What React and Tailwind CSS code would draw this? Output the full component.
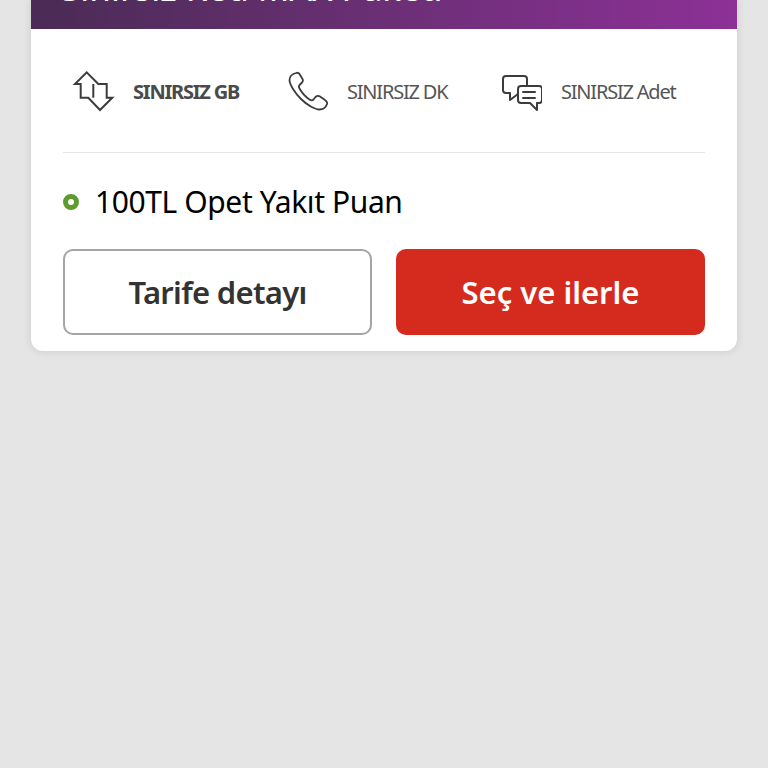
import React from "react";

function DataIcon() {
  return (
    <svg width="40" height="40" viewBox="0 0 40 40" fill="none" stroke="#3c3c3c" strokeWidth="2" strokeLinejoin="miter" className="overflow-visible">
      <path d="M7.7 26.7 V13 H2 L13.7 1.3 L25.3 13 H33.7 V26.7 H39.3 L27 39 L15.3 26.7 Z" />
      <path d="M20.3 13 V26.7" />
    </svg>
  );
}

function PhoneIcon() {
  return (
    <svg width="40" height="40" viewBox="0 0 40 40" fill="none" stroke="#3c3c3c" strokeWidth="1.8" strokeLinejoin="round" strokeLinecap="round">
      <path d="M8 2 C4.5 3 1.5 5.5 1.5 9 C1.5 13.5 7 22 13 28 C19 34 27 38.5 31.5 38.5 C35 38.5 38 36 39 33 C39.5 31 38.5 30 37 29 L32 25.5 C30.5 24.5 29 24.5 27.5 26 L25.5 28.5 C24.5 29.5 23 29.5 21.5 28.5 C17 25.5 14 22 11.5 17.5 C10.5 16 11 14.5 12 13.5 L14 11.5 C15 10.5 15 9 14.5 8 L11.5 3 C10.5 1.5 9.5 1.5 8 2 Z" />
    </svg>
  );
}

function ChatIcon() {
  return (
    <svg width="40" height="40" viewBox="0 0 40 40" fill="none" stroke="#3c3c3c" strokeWidth="2" strokeLinejoin="round" strokeLinecap="round">
      <path d="M25 14 V8 C25 6 24 5 22 5 H4 C2 5 1 6 1 8 V19 C1 21 2 22 4 22 H8 V29 L16 23" />
      <path d="M19 15 H37 C39 15 40 16 40 18 V29 C40 31 39 32 37 32 H35 V39 L28 32 H19 C17 32 16 31 16 29 V18 C16 16 17 15 19 15 Z" />
      <path d="M21 21 H33 M21 27 H33" />
    </svg>
  );
}

function Feature({ icon, label, bold, className }) {
  return (
    <div className={`flex items-center ${className}`}>
      {icon}
      <span
        className={`mt-[2px] text-[20px] leading-none whitespace-nowrap tracking-[-1.2px] ${
          bold ? "font-bold text-[#4a4a4a]" : "text-[#555555]"
        }`}
      >
        {label}
      </span>
    </div>
  );
}

export default function App() {
  return (
    <div className="h-[768px] overflow-hidden bg-[#e5e5e5] font-['Noto_Sans',sans-serif]">
      <div className="mx-[31px] w-[706px] rounded-b-[12px] bg-white shadow-[0_0_8px_rgba(0,0,0,0.12)]">
        <div className="h-[29px] overflow-hidden bg-gradient-to-r from-[#4a2b55] to-[#8d3097] pl-[30px]">
          <p className="mt-[-34px] text-[35px] leading-[44px] text-white whitespace-nowrap">
            Sınırsız Red MAX Paketi
          </p>
        </div>

        <div className="px-[32px]">
          <div className="flex h-[124px] items-center border-b border-[#e4e4e4] pl-[10px]">
            <Feature icon={<DataIcon />} label="SINIRSIZ GB" bold className="w-[215px] gap-[20px]" />
            <Feature icon={<PhoneIcon />} label="SINIRSIZ DK" className="w-[214px] gap-[19px]" />
            <Feature icon={<ChatIcon />} label="SINIRSIZ Adet" className="gap-[19px]" />
          </div>

          <div className="flex h-[96px] items-center pt-[2px]">
            <span className="h-[16px] w-[16px] rounded-full border-[5px] border-[#5f9a2f] bg-white" />
            <span className="ml-[16px] text-[30px] leading-none tracking-[-0.4px] text-black">100TL Opet Yakıt Puan</span>
          </div>

          <div className="flex gap-[24px] pb-[16px]">
            <button className="h-[86px] w-[309px] rounded-[10px] border-2 border-[#a5a5a5] bg-white text-[31px] font-semibold tracking-[-0.7px] text-[#333333]">
              Tarife detayı
            </button>
            <button className="h-[86px] w-[309px] rounded-[10px] bg-[#d52b1e] text-[31px] font-semibold text-white">
              Seç ve ilerle
            </button>
          </div>
        </div>
      </div>
    </div>
  );
}
